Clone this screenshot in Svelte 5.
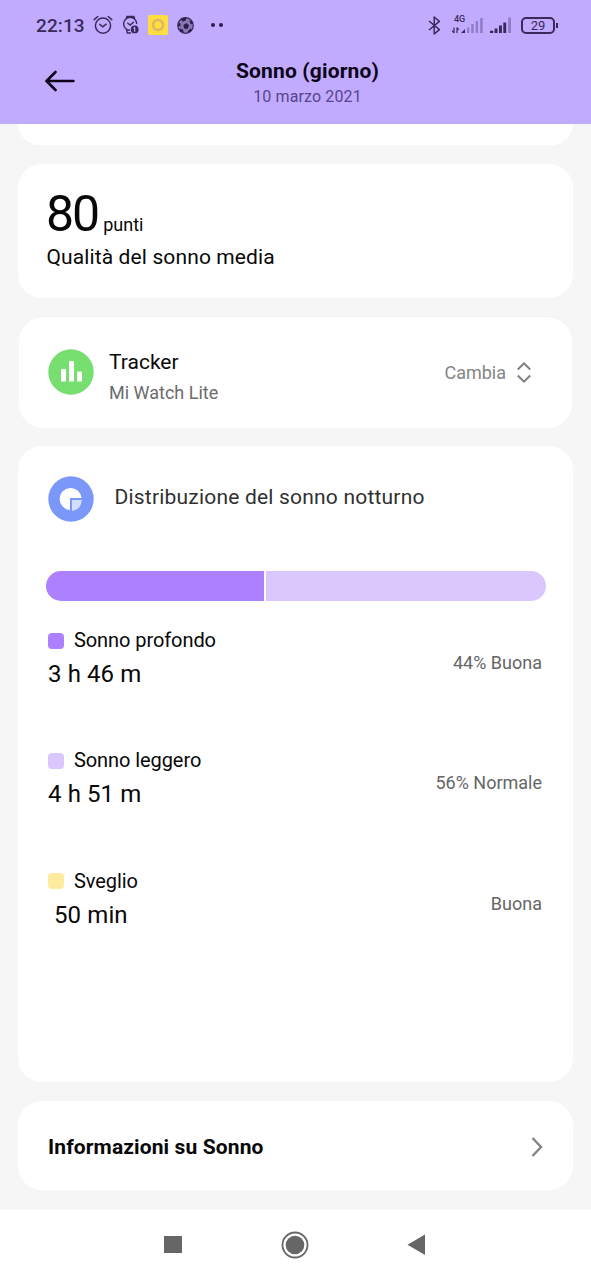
<script>
  const score = 80;
  const phases = [
    { id: 'deep', name: 'Sonno profondo', time: '3 h 46 m', note: '44% Buona', color: '#ac80ff' },
    { id: 'light', name: 'Sonno leggero', time: '4 h 51 m', note: '56% Normale', color: '#d9c7fe' },
    { id: 'awake', name: 'Sveglio', time: '50 min', note: 'Buona', color: '#ffeb9e' },
  ];
  const segments = [
    { width: 43.9, color: '#ac80ff' },
    { width: 56.1, color: '#d9c7fe' },
  ];
</script>

<div class="phone">
  <header>
    <div class="status">
      <div class="status-left">
        <span class="clock">22:13</span>
        <svg class="alarm" width="20" height="20" viewBox="0 0 20 20" fill="none" stroke="#3a2a5c" stroke-width="1.5" stroke-linecap="round">
          <circle cx="10" cy="10.6" r="7.6" />
          <path d="M1.2 4.6 4.8 1.5M18.8 4.6l-3.6-3.1M6.8 9.4l3 2.5 3.4-2.7" />
        </svg>
        <svg class="watch" width="18" height="20" viewBox="0 0 18 20" fill="none" stroke="#3a2a5c" stroke-width="1.4" stroke-linecap="round">
          <path d="M14.600 8.500A6.500 6.500 0 1 0 7.500 15.300M4.200 3.200l.8-1.700h6.800l.8 1.700M4.600 15.200l.7 2.800h3.200M5.800 8.200l2.400 1.900 3.200-2.800" />
          <circle cx="12.700" cy="14.400" r="3.900" fill="#3a2a5c" stroke="none" />
          <path d="M12.700 12.600v3.700M12 13.100l.7-.5" stroke="#c1abff" stroke-width="1.200" />
        </svg>
        <svg class="app" width="20" height="20" viewBox="0 0 20 20">
          <rect width="20" height="20" rx="2" fill="#fcdf3c" />
          <circle cx="10" cy="10" r="5" fill="none" stroke="#dbb56a" stroke-width="2.4" />
        </svg>
        <svg class="ball" width="17" height="17" viewBox="0 0 17 17">
          <circle cx="8.5" cy="8.5" r="7.8" fill="#8b77b8" stroke="#3a2a5c" stroke-width="1.2" />
          <path d="m9.500 6 2.600 2.600-1.600 3.300-3.500-.5-.6-3.500zM3.800 1.600 9.800.6 8.600 3.600 5.400 4.800zM.8 9 1.600 5.400l2 1-.1 3.200zM16.200 7l-1.800-3.600-2 .7 1.400 3.200zM3 14.200l.2-3 2.800 1.600.8 3zM14.800 13.500l-1.300-2-2.600 2.500.1 2z" fill="#2d2048" />
        </svg>
        <span class="dots"><i></i><i></i></span>
      </div>
      <div class="status-right">
        <svg width="13" height="19" viewBox="0 0 13 19" fill="none" stroke="#3a2a5c" stroke-width="1.5" stroke-linejoin="round">
          <path d="m1 5 10.4 8.6L6.2 18V1l5.2 4.3L1 14" />
        </svg>
        <div class="mobile">
          <span class="net">4G</span>
          <svg width="32" height="19" viewBox="0 0 32 19">
            <path d="M2 11.500V17M0 14.500l2 2.500M5 17v-5.500M5 11.500l2 2.500" stroke="#3a2a5c" stroke-width="1.2" fill="none" />
            <path d="m9 17 4-4v4z" fill="#3a2a5c" />
            <path d="M15 17v-5.500h2.300V17zM19.300 17V8h2.400v9zM23.700 17V5h2.400v12zM28.200 17V2h2.500v15z" fill="#8f7bc6" />
          </svg>
        </div>
        <svg class="signal" width="22" height="18" viewBox="0 0 22 18">
          <path d="M0 17v-2.300h3.300V17zM4.600 17v-4.500h2.900V17zM9 17V9.500h2.900V17zM13.300 17V6.500h2.900V17z" fill="#3a2a5c" />
          <path d="M18.200 17V1.500H21V17z" fill="#8f7bc6" />
        </svg>
        <div class="battery"><span>29</span></div>
      </div>
    </div>
    <div class="title-bar">
      <button class="back" aria-label="Indietro">
        <svg width="30" height="22" viewBox="0 0 30 22" fill="none" stroke="#0c0418" stroke-width="2.6" stroke-linecap="round" stroke-linejoin="round">
          <path d="M28.400 11H1.800M10.500 2 1.500 11l9 9" />
        </svg>
      </button>
      <div class="titles">
        <h1>Sonno (giorno)</h1>
        <p>10 marzo 2021</p>
      </div>
    </div>
  </header>

  <main>
    <section class="card previous"></section>

    <section class="card quality">
      <div class="score">
        <strong>{score}</strong>
        <span>punti</span>
      </div>
      <p>Qualità del sonno media</p>
    </section>

    <section class="card tracker">
      <svg width="46" height="46" viewBox="0 0 46 46">
        <circle cx="23" cy="23" r="22.7" fill="#76df70" />
        <path d="M13 21a1 1 0 0 1 1-1h3a1 1 0 0 1 1 1v11.500h-5zM21 13a1 1 0 0 1 1-1h3a1 1 0 0 1 1 1v19.500h-5zM29 23.500a1 1 0 0 1 1-1h3a1 1 0 0 1 1 1v9h-5z" fill="#fff" />
      </svg>
      <div class="device">
        <h2>Tracker</h2>
        <p>Mi Watch Lite</p>
      </div>
      <button class="change">
        <span>Cambia</span>
        <svg width="14" height="22" viewBox="0 0 14 22" fill="none" stroke="#808080" stroke-width="2">
          <path d="m.8 7.500 6.200-6.200L13.200 7.500M.8 13.500l6.200 6.200 6.200-6.200" />
        </svg>
      </button>
    </section>

    <section class="card distribution">
      <div class="heading">
        <svg width="46" height="46" viewBox="0 0 46 46">
          <circle cx="23" cy="23" r="22.7" fill="#7b98f8" />
          <path d="M22 34A11 11 0 1 1 33.600 22H22z" fill="#fff" />
          <path d="M24 24h9.800a11 11 0 0 1-9.800 11z" fill="#d3defe" />
        </svg>
        <h2>Distribuzione del sonno notturno</h2>
      </div>
      <div class="bar">
        {#each segments as segment}
          <div style="width: {segment.width}%; background: {segment.color}"></div>
        {/each}
      </div>
      <ul>
        {#each phases as phase}
          <li>
            <div>
              <div class="name"><i style="background: {phase.color}"></i><span>{phase.name}</span></div>
              <div class="time" class:short={phase.id === 'awake'}>{phase.time}</div>
            </div>
            <span class="note">{phase.note}</span>
          </li>
        {/each}
      </ul>
    </section>

    <section class="card info">
      <h2>Informazioni su Sonno</h2>
      <svg width="12" height="22" viewBox="0 0 12 22" fill="none" stroke="#858585" stroke-width="2.500">
        <path d="m1.500 2 8.500 9-8.500 9" />
      </svg>
    </section>
  </main>

  <nav>
    <svg width="20" height="28" viewBox="0 0 20 28"><path d="M1 5h18v17H1z" fill="#666" /></svg>
    <svg width="28" height="28" viewBox="0 0 28 28">
      <circle cx="14" cy="14" r="12.500" fill="none" stroke="#666" stroke-width="1.800" />
      <circle cx="14" cy="14" r="9.300" fill="#666" />
    </svg>
    <svg width="20" height="28" viewBox="0 0 20 28"><path d="M18 3.500v20.500L.5 13.800z" fill="#666" /></svg>
  </nav>
</div>

<style>
  :global(body) {
    margin: 0;
    background: #f6f6f6;
  }

  .phone {
    width: 591px;
    height: 1280px;
    display: flex;
    flex-direction: column;
    overflow: hidden;
    font-family: Roboto, sans-serif;
    color: #080808;
  }

  h1, h2, p, ul {
    margin: 0;
    padding: 0;
    white-space: nowrap;
  }

  svg {
    display: block;
    flex: none;
  }

  button {
    border: 0;
    padding: 0;
    background: none;
    font: inherit;
  }

  header {
    height: 124px;
    flex: none;
    background: #c1abff;
  }

  .status {
    height: 50px;
    padding: 0 36px 0 36px;
    display: flex;
    justify-content: space-between;
    align-items: center;
    color: #3a2a5c;
  }

  .status-left, .status-right {
    display: flex;
    align-items: center;
  }

  .clock {
    width: 57px;
    font-size: 19px;
    font-weight: 500;
    letter-spacing: 0.1px;
  }

  .watch {
    margin-left: 9px;
  }

  .app {
    margin-left: 8px;
  }

  .ball {
    margin-left: 9px;
  }

  .dots {
    display: flex;
    gap: 4px;
    margin-left: 17px;
  }

  .dots i {
    width: 4px;
    height: 4px;
    border-radius: 50%;
    background: #2d2048;
  }

  .mobile {
    display: grid;
    margin-left: 11px;
  }

  .mobile > * {
    grid-area: 1 / 1;
  }

  .net {
    padding-left: 2px;
    font-size: 9px;
    line-height: 7px;
    font-weight: 500;
  }

  .signal {
    margin-left: 6px;
  }

  .battery {
    width: 30px;
    height: 13px;
    margin-left: 9px;
    border: 2px solid #3a2a5c;
    border-radius: 5px;
    position: relative;
    font-size: 13px;
    line-height: 14px;
    text-align: center;
  }

  .battery::after {
    content: '';
    position: absolute;
    right: -5px;
    top: 4px;
    width: 2px;
    height: 5px;
    background: #3a2a5c;
  }

  .title-bar {
    display: grid;
    grid-template-columns: 45px 1fr 21px;
    align-items: start;
    height: 74px;
  }

  .back {
    grid-area: 1 / 2;
    justify-self: start;
    margin-top: 20px;
  }

  .titles {
    grid-area: 1 / 2;
    justify-self: center;
    text-align: center;
    padding-top: 8px;
  }

  h1 {
    font-size: 21px;
    line-height: 26px;
    font-weight: 700;
    letter-spacing: 0.15px;
    color: #0c0418;
  }

  .titles p {
    font-size: 16px;
    line-height: 26px;
    letter-spacing: 0.12px;
    color: #59458c;
  }

  main {
    flex: 1;
    padding: 0 18px;
    background: #f6f6f6;
  }

  .card {
    box-sizing: border-box;
    background: #fff;
    border-radius: 24px;
  }

  .previous {
    height: 21px;
    border-radius: 0 0 24px 24px;
  }

  .quality {
    height: 134px;
    margin-top: 19px;
    padding: 25px 28px;
  }

  .score {
    display: flex;
    align-items: baseline;
    gap: 5px;
    height: 56px;
  }

  .score strong {
    font-size: 50px;
    line-height: 51px;
    font-weight: 400;
    letter-spacing: -2px;
  }

  .score span {
    font-size: 18px;
  }

  .quality p {
    padding-left: 0.5px;
    font-size: 21px;
    line-height: 24px;
    letter-spacing: 0.12px;
  }

  .tracker {
    height: 111px;
    margin: 19px 1px 0;
    padding: 0 41px 0 29px;
    display: flex;
    align-items: center;
    box-shadow: 0 -1px 0 #f1f1f1;
  }

  .tracker > svg {
    margin: -1px 0 0 -0.5px;
  }

  .device {
    margin-left: 15.5px;
    padding-top: 9px;
    flex: 1;
  }

  .device h2 {
    font-size: 21px;
    line-height: 30px;
    font-weight: 400;
  }

  .device p {
    font-size: 18px;
    line-height: 31px;
    color: #6c6c6c;
  }

  .change {
    display: flex;
    align-items: center;
    gap: 11px;
    font-size: 18px;
    color: #858585;
  }

  .distribution {
    height: 636px;
    margin-top: 18px;
    padding: 30px 28px 0;
  }

  .heading {
    display: flex;
    align-items: center;
    padding-left: 1.5px;
  }

  .heading h2 {
    margin: -5px 0 0 21px;
    font-size: 21px;
    font-weight: 400;
    letter-spacing: 0.2px;
    color: #303030;
  }

  .bar {
    display: flex;
    gap: 2px;
    width: 500px;
    height: 30px;
    margin: 49px 0 0 -0.5px;
    border-radius: 15px;
    overflow: hidden;
  }

  ul {
    list-style: none;
    margin-top: 23px;
  }

  li {
    display: flex;
    justify-content: space-between;
    align-items: flex-start;
    height: 72px;
    margin-bottom: 48.3px;
    padding: 0 3px 0 2px;
  }

  .name {
    display: flex;
    align-items: center;
    gap: 10px;
    font-size: 20px;
    line-height: 33px;
    letter-spacing: -0.08px;
  }

  .name i {
    width: 16px;
    height: 16px;
    border-radius: 4px;
  }

  .time {
    font-size: 24px;
    line-height: 35px;
    letter-spacing: 0.1px;
  }

  .short {
    padding-left: 6px;
  }

  .note {
    margin-top: 28px;
    font-size: 18px;
    color: #666;
  }

  .info {
    height: 89px;
    margin-top: 19px;
    padding: 2px 30px 0;
    display: flex;
    justify-content: space-between;
    align-items: center;
  }

  .info h2 {
    font-size: 21px;
    font-weight: 700;
    letter-spacing: 0.12px;
  }

  .info svg {
    margin-right: 0;
  }

  nav {
    height: 70px;
    flex: none;
    display: flex;
    justify-content: center;
    align-items: center;
    gap: 98px;
    padding-right: 2px;
    box-sizing: border-box;
    background: #fff;
  }
</style>
